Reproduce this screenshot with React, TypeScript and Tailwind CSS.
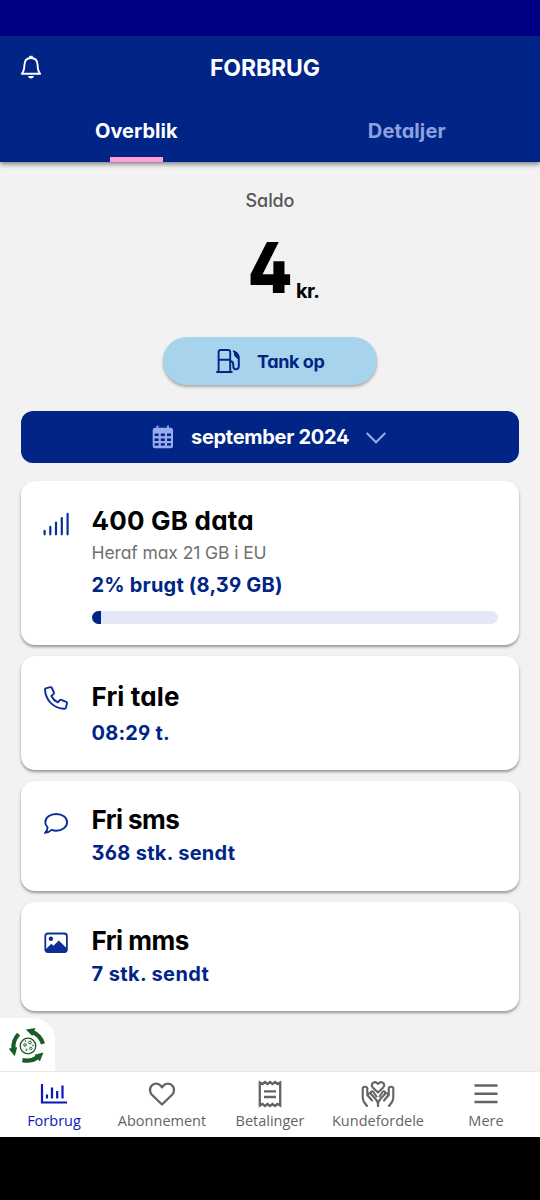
import type { ReactNode } from "react";

const GEO = "font-['Inter',sans-serif] [font-feature-settings:'cv11','cv02','cv03','cv04','cv09']";

function BellIcon() {
  return (
    <svg width="24" height="26" viewBox="0 0 24 26" fill="none" stroke="white" strokeWidth="1.9" strokeLinejoin="round">
      <path d="M2.800 19.800C4.900 17.500 5.300 15 5.400 11C5.500 6.600 7.700 4 12 4S18.500 6.600 18.600 11C18.700 15 19.100 17.500 21.200 19.800Z" />
      <path d="M12 4V1.800" strokeWidth="3.600" />
      <path d="M9 21.900H15C14.500 23.600 13.300 24.400 12 24.400S9.500 23.600 9 21.900Z" fill="white" stroke="none" />
    </svg>
  );
}

function FuelIcon() {
  return (
    <svg width="24" height="26" viewBox="0 0 24 26" fill="none" stroke="#002587" strokeWidth="1.9" strokeLinejoin="round" strokeLinecap="round">
      <path d="M2.600 23.600V4Q2.600 2 4.600 2H12.200Q14.200 2 14.200 4V23.600M1 24H15.800M2.800 11.700H14" />
      <path d="M14.600 13.200C17 13.200 17.300 14.500 17.300 17V18.300C17.300 20.300 18.200 21.400 19.800 21.400S22.800 20.300 22.800 18.300V10C22.800 7 21 4.600 17.800 3.300" />
      <path d="M18.300 4.200L18.800 8L22.300 11V8.500L20.500 5.200Z" fill="#002587" strokeWidth="1" />
    </svg>
  );
}

function CalendarIcon() {
  return (
    <svg width="22" height="24" viewBox="0 0 22 24">
      <path d="M5.500 .5V4M16 .5V4" stroke="#98abed" strokeWidth="1.800" />
      <rect x=".7" y="2.700" width="20.300" height="20.600" rx="2.500" fill="#98abed" />
      <g fill="#002587">
        <rect x="2.600" y="8.500" width="4" height="2.600" /><rect x="8.800" y="8.500" width="4" height="2.600" /><rect x="15" y="8.500" width="4" height="2.600" />
        <rect x="2.600" y="13.400" width="4" height="2.600" /><rect x="8.800" y="13.400" width="4" height="2.600" /><rect x="15" y="13.400" width="4" height="2.600" />
        <rect x="2.600" y="18.200" width="4" height="2.400" /><rect x="8.800" y="18.200" width="4" height="2.400" /><rect x="15" y="18.200" width="4" height="2.400" />
      </g>
    </svg>
  );
}

function SignalIcon() {
  return (
    <svg width="28" height="24" viewBox="0 0 28 24" stroke="#0b2f96" strokeWidth="2.200" strokeLinecap="round">
      <path d="M2.600 18.800V22.300M8.300 14.800V22.300M14 10.500V22.300M19.800 6V22.300M25.600 1.800V22.300" />
    </svg>
  );
}

function PhoneIcon() {
  return (
    <svg width="26" height="26" viewBox="0 0 26 26" fill="none" stroke="#0b2f96" strokeWidth="1.900" strokeLinejoin="round">
      <path d="M2.700 3.300L7.300 2.200Q8.400 2 8.900 3L10.900 7.500Q11.300 8.400 10.500 9.100L8.300 11C9.800 14 11.700 15.900 14.800 17.400L16.800 15.200Q17.500 14.500 18.400 14.900L23.200 16.900Q24.300 17.400 24 18.500L22.900 22.800Q22.600 23.800 21.500 23.700C10.900 23.600 2.400 15.300 2 4.400Q1.900 3.500 2.700 3.300Z" />
    </svg>
  );
}

function ChatIcon() {
  return (
    <svg width="26" height="23" viewBox="0 0 26 23" fill="none" stroke="#0b2f96" strokeWidth="1.900" strokeLinejoin="round">
      <path d="M4.600 15.300C3 13.800 2.300 12.200 2.300 10.300C2.300 5.400 7.100 2 13.200 2S24.100 5.400 24.100 10.300S19.200 18.700 13.200 18.700Q10.700 18.700 8.700 17.900C6.700 19.700 4.500 20.900 2 20.900C3.700 19.200 4.600 17.400 4.600 15.300Z" />
    </svg>
  );
}

function PhotoIcon() {
  return (
    <svg width="24" height="22" viewBox="0 0 24 22">
      <rect x="1.300" y="1.500" width="21.600" height="18.500" rx="2.500" fill="none" stroke="#0b2f96" strokeWidth="1.800" />
      <circle cx="6.900" cy="6.800" r="2.200" fill="#0b2f96" />
      <path d="M2 17L7.300 11.800L9.500 13.800L14.700 8.600L22 15.500V20H2Z" fill="#0b2f96" />
    </svg>
  );
}

function RecycleArrow({ className }: { className: string }) {
  return (
    <g className={className}>
      <path d="M24 5.200Q31.300 8.300 34 16.800" fill="none" stroke="#195d24" strokeWidth="4.200" />
      <path d="M16.800 2.400L26.500 1L23.300 9Z" fill="#195d24" />
    </g>
  );
}

function Card({ icon, title, spacing, className, children }: { icon: ReactNode; title: string; spacing: string; className: string; children: ReactNode }) {
  return (
    <section className={`flex shrink-0 rounded-[14px] bg-white shadow-[0_2px_3px_rgba(0,0,0,0.38)] ${className}`}>
      <div className="flex w-[70.500px] shrink-0 justify-center pr-[1px]">{icon}</div>
      <div className="min-w-0 flex-1 pr-[21px]">
        <h2 className={`text-[26px] leading-[32px] font-bold text-black ${spacing}`}>{title}</h2>
        {children}
      </div>
    </section>
  );
}

function NavItem({ icon, label, active }: { icon: ReactNode; label: string; active?: boolean }) {
  return (
    <button className={`flex flex-1 flex-col items-center pt-[8px] ${active ? "text-[#0719b8]" : "text-[#646464]"}`}>
      <span className="flex h-[28px] items-center">{icon}</span>
      <span className="mt-[3px] text-[14.500px] leading-[20px] whitespace-nowrap">{label}</span>
    </button>
  );
}

export default function App() {
  return (
    <div className={`flex h-[1200px] w-[540px] flex-col overflow-hidden bg-[#f2f2f2] ${GEO}`}>
      <div className="h-9 shrink-0 bg-[#000085]" />
      <header className="z-10 h-[126px] shrink-0 bg-[#002587] shadow-[0_2px_5px_rgba(0,0,0,0.5)]">
        <div className="grid h-[62px] grid-cols-[60px_1fr_70px] items-center">
          <div className="pl-[19px]"><BellIcon /></div>
          <h1 className="pt-[2px] text-center text-[23px] leading-[28px] font-bold tracking-[-0.1px] text-white">FORBRUG</h1>
        </div>
        <nav className="flex h-16 pl-[1px] text-[20px] font-bold">
          <div className="flex w-[271px] flex-col items-center text-white">
            <span className="flex h-[58.500px] items-center pt-[8px]">Overblik</span>
            <span className="h-[5.500px] w-[53px] bg-[#ff9fdc]" />
          </div>
          <div className="flex w-[269px] flex-col items-center text-[#8fa1df]">
            <span className="flex h-[58.500px] items-center pt-[8px] pl-[2px] tracking-[0.1px]">Detaljer</span>
          </div>
        </nav>
      </header>

      <main className="flex h-[909px] shrink-0 flex-col px-[21px]">
        <p className="mt-[27px] text-center text-[18px] leading-6 font-medium tracking-[-0.1px] text-[#555]">Saldo</p>
        <div className="mt-[14px] flex h-[85px] shrink-0 items-baseline pl-[227px] leading-[82px] text-black">
          <span className="w-[46px] origin-left scale-x-[0.9] text-[70px] font-black">4</span>
          <span className="relative top-[5px] ml-[2px] text-[20px] font-bold tracking-[-0.6px]">kr.</span>
        </div>
        <button className="mt-[25px] flex h-[48px] w-[214px] shrink-0 items-center self-center rounded-full bg-[#a7d3ec] pl-[53px] text-[18px] font-bold text-[#002587] shadow-[0_2px_3px_rgba(0,0,0,0.3)]">
          <FuelIcon />
          <span className="ml-[17px] tracking-[-0.4px]">Tank op</span>
        </button>
        <button className="mt-[26px] flex h-[52px] shrink-0 items-center rounded-[12px] bg-[#002587] pl-[131px] text-[20px] font-bold text-white">
          <CalendarIcon />
          <span className="ml-[17px] w-[158px] tracking-[-0.3px] whitespace-nowrap">september 2024</span>
          <svg className="mt-[2px] ml-[17px]" width="20" height="14" viewBox="0 0 20 14" fill="none" stroke="#98abed" strokeWidth="2">
            <path d="M.7 2L10 11.300L19.300 2" />
          </svg>
        </button>

        <Card icon={<SignalIcon />} title="400 GB data" spacing="tracking-[0.2px]" className="mt-[18px] h-[164px] pt-[24px] [&>div>svg]:mt-[7px]">
          <p className="mt-[4px] text-[17.500px] leading-6 tracking-[-0.1px] text-[#707070]">Heraf max 21 GB i EU</p>
          <p className="mt-[8px] text-[20px] leading-6 font-bold tracking-[0.2px] text-[#002587]">2% brugt (8,39 GB)</p>
          <div className="mt-[14px] h-[13px] overflow-hidden rounded-full bg-[#e3e7f6]">
            <div className="h-full w-[9px] bg-[#002587]" />
          </div>
        </Card>
        <Card icon={<PhoneIcon />} title="Fri tale" spacing="tracking-[0.15px]" className="mt-[11px] h-[114px] pt-[25px] [&>div>svg]:mt-[4px]">
          <p className="mt-[8px] text-[20px] leading-6 font-bold tracking-[0.2px] text-[#002587]">08:29 t.</p>
        </Card>
        <Card icon={<ChatIcon />} title="Fri sms" spacing="tracking-[-0.55px]" className="mt-[11px] h-[110px] pt-[23px] [&>div>svg]:mt-[8px]">
          <p className="mt-[5px] text-[20px] leading-6 font-bold tracking-[0.3px] text-[#002587]">368 stk. sendt</p>
        </Card>
        <Card icon={<PhotoIcon />} title="Fri mms" spacing="tracking-[-0.5px]" className="mt-[11px] h-[109px] pt-[23px] [&>div>svg]:mt-[7px]">
          <p className="mt-[5px] text-[20px] leading-6 font-bold tracking-[0.38px] text-[#002587]">7 stk. sendt</p>
        </Card>
        <div className="mt-[7px] -ml-[21px] flex h-[54px] w-[55px] shrink-0 items-center justify-center rounded-tr-[22px] bg-white pt-[2px]">
          <svg width="38" height="38" viewBox="0 0 38 38">
            <circle cx="19" cy="19" r="7.800" fill="#f4f8f4" stroke="#22552b" strokeWidth="1.300" />
            <g fill="none" stroke="#22552b" strokeWidth=".9">
              <circle cx="16" cy="18" r="1.300" /><circle cx="21" cy="15.500" r="1.400" /><circle cx="17.500" cy="22.800" r=".6" /><circle cx="21.800" cy="21.500" r="1.200" />
              <circle cx="16.500" cy="14" r=".4" /><circle cx="24" cy="18.500" r=".4" />
            </g>
            <RecycleArrow className="" />
            <RecycleArrow className="origin-[19px_19px] rotate-[120deg]" />
            <RecycleArrow className="origin-[19px_19px] rotate-[240deg]" />
          </svg>
        </div>
      </main>

      <footer className="flex h-[66px] shrink-0 border-t border-[#e9e9e9] bg-white font-['Open_Sans','Noto_Sans',sans-serif] font-medium">
        <NavItem active label="Forbrug" icon={
          <svg width="28" height="24" viewBox="0 0 28 24" fill="none" stroke="currentColor" strokeWidth="2.200"><path d="M2 2V20.500H27M7 12.500V16.500M12 5.500V16.500M17.200 9V16.500M22.500 3.500V16.500" /></svg>
        } />
        <NavItem label="Abonnement" icon={
          <svg width="28" height="26" viewBox="0 0 28 26" fill="none" stroke="currentColor" strokeWidth="2.300" strokeLinejoin="round"><path d="M14 23.500L4.200 14C1.700 11.500 1.300 7.600 3.300 5C5.800 1.900 10.500 2 13 5L14 6.300L15 5C17.500 2 22.200 1.900 24.700 5C26.700 7.600 26.300 11.500 23.800 14Z" /></svg>
        } />
        <NavItem label="Betalinger" icon={
          <svg width="24" height="28" viewBox="0 0 24 28" fill="none" stroke="currentColor" strokeWidth="2.300"><path d="M1.800 2.500L4.500 4L7 2L9.500 4L12 2L14.500 4L17 2L19.500 4L22.200 2.500V25.500L19.500 24L17 26L14.500 24L12 26L9.500 24L7 26L4.500 24L1.800 25.500ZM6 11.300H18M6 17H18" /></svg>
        } />
        <NavItem label="Kundefordele" icon={
          <svg width="34" height="28" viewBox="0 0 34 28" fill="none" stroke="currentColor" strokeWidth="2.100" strokeLinecap="round" strokeLinejoin="round">
            <path d="M17 12.500L11.800 7.400C9.200 4.500 12.600.6 15.900 2.800L17 3.900L18.100 2.800C21.400.6 24.800 4.500 22.200 7.400Z" />
            <path d="M6 26L3 22Q1.700 20 1.700 17V9C1.700 6 6.300 6 6.300 9V15.500M11 20.500L6.800 15.500C6 13.500 8.500 12.500 10 14L15 19.500Q17 21.500 17 26M9.800 13C9.800 10.500 12.500 11 13 13L15.500 16.500" />
            <path d="M28 26L31 22Q32.300 20 32.300 17V9C32.300 6 27.700 6 27.700 9V15.500M23 20.500L27.200 15.500C28 13.500 25.500 12.500 24 14L19 19.500Q17 21.500 17 26M24.200 13C24.200 10.500 21.500 11 21 13L18.500 16.500" />
          </svg>
        } />
        <NavItem label="Mere" icon={
          <svg width="24" height="24" viewBox="0 0 24 24" fill="none" stroke="currentColor" strokeWidth="2.400"><path d="M.5 3.500H23.500M.5 11.800H23.500M.5 20H23.500" /></svg>
        } />
      </footer>
      <div className="flex-1 bg-black" />
    </div>
  );
}
